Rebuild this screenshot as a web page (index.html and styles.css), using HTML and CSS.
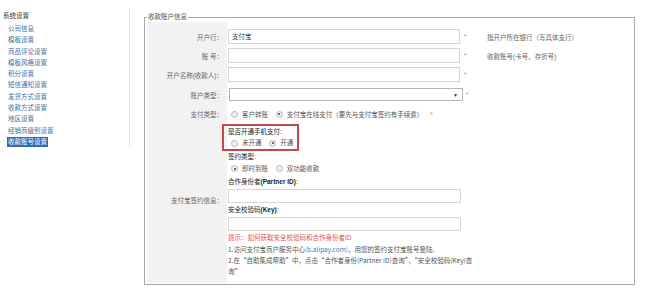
FILE: index.html
```html
<!DOCTYPE html>
<html lang="zh-CN">
<head>
    <meta charset="UTF-8">
    <title>收款账号设置</title>
    <link rel="stylesheet" href="styles.css">
</head>
<body>
    <div class="page">
        <div class="side">
            <div class="side-title">系统设置</div>
            <ul class="side-menu">
                <li>公司信息</li>
                <li>模板设置</li>
                <li>商品评论设置</li>
                <li>模板风格设置</li>
                <li>积分设置</li>
                <li>短信通知设置</li>
                <li>发货方式设置</li>
                <li>收款方式设置</li>
                <li>地区设置</li>
                <li>经销商级别设置</li>
                <li><span class="active">收款账号设置</span></li>
            </ul>
        </div>

        <div class="main">
            <fieldset class="box">
                <legend>收款账户信息</legend>
                <table class="form">
                    <tr class="row-first">
                        <td class="label">开户行：</td>
                        <td class="value"><span class="input">支付宝</span><span class="star">*</span></td>
                        <td class="hint">指开户所在银行（写具体支行）</td>
                    </tr>
                    <tr>
                        <td class="label">账 号：</td>
                        <td class="value"><span class="input"></span><span class="star">*</span></td>
                        <td class="hint">收款账号(卡号、存折号)</td>
                    </tr>
                    <tr>
                        <td class="label">开户名称(收款人)：</td>
                        <td class="value"><span class="input"></span><span class="star">*</span></td>
                        <td class="hint"></td>
                    </tr>
                    <tr class="row-select">
                        <td class="label">账户类型：</td>
                        <td class="value"><span class="select"><span></span><span class="arrow">▼</span></span><span class="star">*</span></td>
                        <td class="hint"></td>
                    </tr>
                    <tr class="row-pay">
                        <td class="label">支付类型：</td>
                        <td class="value nowrap" colspan="2">
                            <span class="radio"></span><span class="opt">客户转账</span>
                            <span class="radio on"></span><span class="opt">支付宝在线支付（要先与支付宝签约有手续费）</span><span class="star">*</span>
                        </td>
                    </tr>
                    <tr class="row-alipay">
                        <td class="label">支付宝签约信息：</td>
                        <td class="value">
                            <div class="mobile">
                                <div class="sub-title">是否开通手机支付:</div>
                                <div class="radios">
                                    <span class="radio"></span><span class="opt">未开通</span>
                                    <span class="radio on"></span><span class="opt">开通</span>
                                </div>
                            </div>
                            <div class="sub-title">签约类型:</div>
                            <div class="radios">
                                <span class="radio on"></span><span class="opt">即时到账</span>
                                <span class="radio"></span><span class="opt">双功能收款</span>
                            </div>
                            <div class="sub-title field">合作身份者<b>(Partner ID)</b>:</div>
                            <span class="input wide"></span>
                            <div class="sub-title field">安全校验码<b>(Key)</b>:</div>
                            <span class="input wide"></span>
                            <div class="tip">提示：如何获取安全校验码和合作身份者ID</div>
                            <div class="note">1.访问支付宝商户服务中心<span class="link">(b.alipay.com)</span>，用您的签约支付宝账号登陆.</div>
                            <div class="note">2.在“自助集成帮助”中，点击“合作者身份(Partner ID)查询”，“安全校验码(Key)查询”</div>
                        </td>
                        <td class="hint"></td>
                    </tr>
                </table>
            </fieldset>
        </div>
    </div>
</body>
</html>
```

FILE: styles.css
```css
body {
    margin: 0;
    padding: 0;
    background: #fff;
    color: #666;
    font-family: "Liberation Sans", "Noto Sans CJK SC", sans-serif;
    font-size: 6.5px;
}

.page {
    display: flex;
    align-items: flex-start;
}

/* left menu */
.side {
    width: 126px;
    height: 137px;
    margin-top: 8px;
    padding: 2px 0 0 3px;
    border-right: 1px solid #e4e4e4;
}

.side-title {
    line-height: 11px;
    margin-bottom: 2px;
    color: #333;
}

.side-menu {
    list-style: none;
    margin: 0;
    padding: 0 0 0 5px;
}

.side-menu li {
    line-height: 11.3px;
    color: #47709e;
}

.side-menu .active {
    display: inline-block;
    background: #2f6db3;
    color: #fff;
    padding: 0 1px;
    margin-left: -1px;
    line-height: 10px;
}

/* form box */
.main {
    margin-left: 14px;
    margin-top: 12px;
}

.box {
    width: 487px;
    margin: 0;
    padding: 0 0 1px 2px;
    border: 1px solid #a8a8a8;
}

.box legend {
    padding: 0 1px;
    line-height: 10px;
    color: #555;
}

.form {
    border-collapse: collapse;
    width: 487px;
}

.form td {
    padding: 0;
    height: 19px;
    vertical-align: middle;
}

.form .label {
    width: 76px;
    padding-right: 4px;
    background: #f2f2f2;
    text-align: right;
    color: #666;
    white-space: nowrap;
}

.form .value {
    width: 259px;
    padding-left: 1px;
}

.form .hint {
    color: #666;
    white-space: nowrap;
}

.row-first td {
    height: 19px;
    padding-top: 5px;
}

.row-select td {
    height: 21px;
}

.row-pay td {
    height: 18px;
}

.nowrap {
    white-space: nowrap;
}

.input {
    display: inline-block;
    box-sizing: border-box;
    width: 232px;
    height: 15px;
    line-height: 13px;
    padding: 0 3px;
    border: 1px solid #d6d6d6;
    background: #fff;
    color: #444;
    vertical-align: middle;
}

.select {
    display: inline-flex;
    justify-content: space-between;
    align-items: center;
    box-sizing: border-box;
    width: 234px;
    height: 13px;
    margin-left: 1px;
    padding: 0 4px 0 3px;
    border: 1px solid #b4b4b4;
    vertical-align: middle;
}

.select .arrow {
    font-size: 5px;
    color: #333;
}

.star {
    margin-left: 4px;
    color: #999;
    vertical-align: middle;
}

.row-select .star {
    margin-left: 3px;
}

/* radios */
.radio {
    display: inline-block;
    box-sizing: border-box;
    width: 7px;
    height: 7px;
    margin: 0 4px 0 3px;
    border: 1px solid #b8b8b8;
    border-radius: 50%;
    background: #efefef;
    vertical-align: middle;
    position: relative;
}

.radio.on::after {
    content: "";
    position: absolute;
    left: 1.5px;
    top: 1.5px;
    width: 2px;
    height: 2px;
    border-radius: 50%;
    background: #444;
}

.opt {
    vertical-align: middle;
    color: #555;
    margin-right: 3px;
}

/* alipay block */
.row-alipay td {
    padding-bottom: 6px;
}

.row-alipay .value {
    padding-top: 1px;
    white-space: normal;
}

.mobile {
    box-sizing: border-box;
    width: 77px;
    margin-left: -6px;
    padding-left: 4px;
    border: 2px solid #bf4a4f;
}

.sub-title {
    line-height: 11px;
    color: #222;
}

.sub-title b {
    font-weight: bold;
}

.radios {
    line-height: 12px;
    white-space: nowrap;
}

.field {
    line-height: 13px;
}

.input.wide {
    display: block;
    width: 233px;
    height: 14px;
    margin-top: 1px;
}

.tip {
    margin-top: 1px;
    line-height: 12px;
    color: #e0505e;
}

.note {
    width: 252px;
    line-height: 11px;
    color: #555;
    font-family: "Noto Sans CJK SC", "Liberation Sans", sans-serif;
}

.link {
    color: #3b7cc6;
}
```
